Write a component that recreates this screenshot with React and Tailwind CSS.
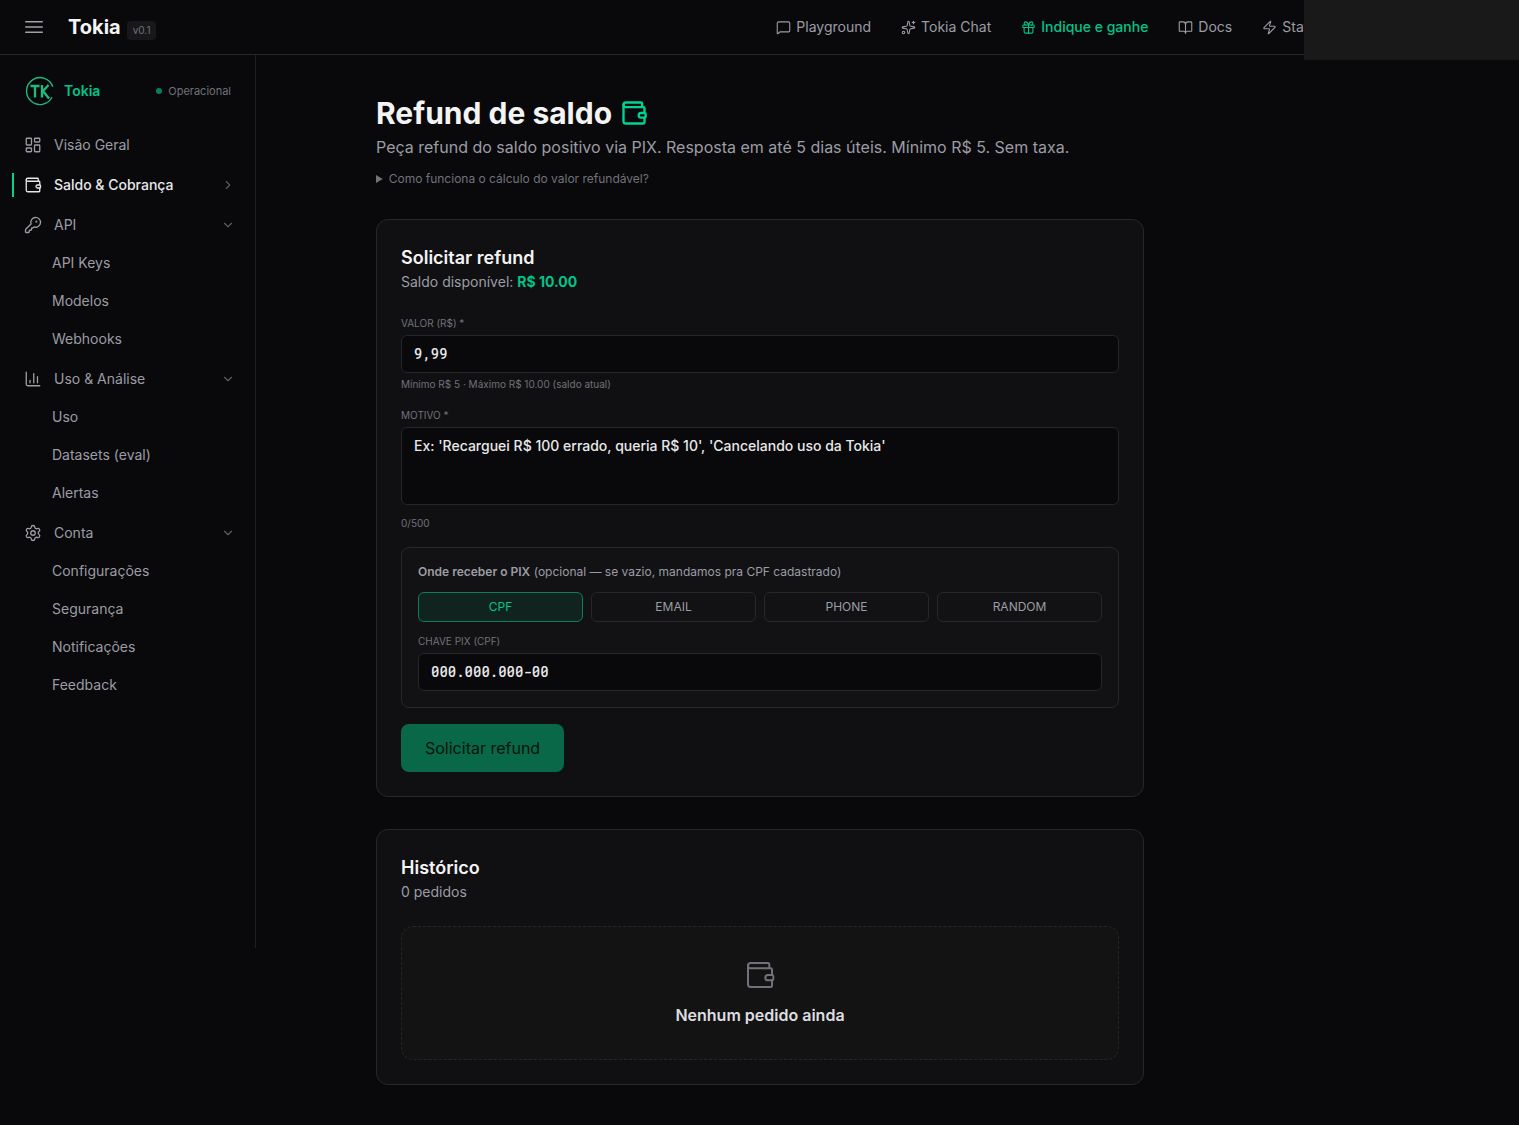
import {
  BookOpen, ChartColumn, ChevronDown, ChevronRight, Gift, KeyRound, LayoutDashboard,
  MessageSquare, Settings, Sparkles, Wallet, Zap,
} from "lucide-react";

const topLinks = [
  { label: "Playground", icon: MessageSquare },
  { label: "Tokia Chat", icon: Sparkles },
  { label: "Indique e ganhe", icon: Gift, accent: true },
  { label: "Docs", icon: BookOpen },
  { label: "Status", icon: Zap },
];

const groups = [
  { label: "Visão Geral", icon: LayoutDashboard },
  { label: "Saldo & Cobrança", icon: Wallet, active: true, chevron: ChevronRight },
  { label: "API", icon: KeyRound, chevron: ChevronDown, items: ["API Keys", "Modelos", "Webhooks"] },
  { label: "Uso & Análise", icon: ChartColumn, chevron: ChevronDown, items: ["Uso", "Datasets (eval)", "Alertas"] },
  { label: "Conta", icon: Settings, chevron: ChevronDown, items: ["Configurações", "Segurança", "Notificações", "Feedback"] },
];

function Logo() {
  return (
    <svg viewBox="-1 -1 32 32" className="size-8" fill="none" stroke="#1dbb7f" aria-hidden="true">
      <path d="M27.800 10.700A13.500 13.500 0 1 0 27 21.300" strokeWidth="1.400" />
      <path d="M5.500 10h9M10 10v11.500M17 9v12.500M23.500 9l-5.500 6 6 7.500" strokeWidth="2.300" />
    </svg>
  );
}

function Header() {
  return (
    <header className="flex h-[55px] items-center border-b border-[#27272a] pl-[22px]">
      <button type="button" aria-label="Menu" className="text-[#a1a1aa]">
        <svg width="24" height="24" viewBox="0 0 24 24" fill="none" stroke="currentColor" strokeWidth="1.5" strokeLinecap="round">
          <path d="M3.750 6.750h16.500M3.750 12h16.500M3.750 17.250h16.500" />
        </svg>
      </button>
      <a href="#" className="ml-[22px] text-xl font-bold text-[#f4f4f5]">Tokia</a>
      <span className="ml-1.5 mt-1.5 rounded bg-[#18181b] px-1.5 py-0.5 text-[10px] leading-[15px] text-[#71717a]">v0.1</span>
      <nav className="ml-auto flex shrink-0 gap-[30px]">
        {topLinks.map(({ label, icon: Icon, accent }) => (
          <a key={label} href="#" className={accent ? "flex items-center gap-[5px] text-sm font-medium text-[#00c489]" : "flex items-center gap-[5px] text-sm text-[#9c9ca5]"}>
            <Icon size={15} strokeWidth={1.75} />
            {label}
          </a>
        ))}
      </nav>
      <div className="w-[195px] shrink-0" />
    </header>
  );
}

function Sidebar() {
  return (
    <aside className="h-[893px] w-64 shrink-0 border-r border-[#1f1f23] px-3 pt-5">
      <div className="mb-5 flex h-8 items-center px-3">
        <Logo />
        <span className="ml-2 text-sm font-semibold text-[#00c489]">Tokia</span>
        <span className="ml-auto flex items-center gap-1.5 text-[11px] text-[#71717a]">
          <span className="size-1.5 rounded-full bg-[#087f5b]" />
          Operacional
        </span>
      </div>
      <nav className="flex flex-col gap-1 text-sm text-[#9c9ca5]">
        {groups.map(({ label, icon: Icon, active, chevron: Chevron, items }) => (
          <div key={label} className="flex flex-col gap-0.5">
            <a href="#" className={active ? "relative flex h-9 items-center pl-3 pr-2 font-medium text-[#e8e8ea]" : "flex h-9 items-center pl-3 pr-2"}>
              {active && <span className="absolute left-0 top-1.5 h-6 w-0.5 bg-[#00d492]" />}
              <Icon size={18} strokeWidth={1.75} />
              <span className="ml-3">{label}</span>
              {Chevron && <Chevron size={14} strokeWidth={2} className="ml-auto text-[#5b5b63]" />}
            </a>
            {items?.map((item) => (
              <a key={item} href="#" className="flex h-9 items-center pl-10">{item}</a>
            ))}
          </div>
        ))}
      </nav>
    </aside>
  );
}

const card = "rounded-xl border border-[#27272a] bg-[#101012] p-6";
const field = "block w-full rounded-md border border-[#27272a] bg-[#09090b] px-3 text-sm font-medium text-[#e8e8ea]";
const mono = "h-[38px] pb-0.5 font-['Roboto_Mono','DejaVu_Sans_Mono',monospace]";
const caption = "block text-[10px] leading-[15px] text-[#71717a]";

function RefundForm() {
  return (
    <form className={card}>
      <h2 className="mt-0.5 text-lg leading-6 font-semibold text-[#f4f4f5]">Solicitar refund</h2>
      <p className="text-sm leading-6 text-[#9c9ca5]">
        Saldo disponível: <strong className="font-bold text-[#00c489]">R$ 10.00</strong>
      </p>
      <label htmlFor="valor" className={`${caption} mt-[22px] mb-1`}>VALOR (R$) *</label>
      <input id="valor" defaultValue="9,99" className={`${field} ${mono}`} />
      <p className={`${caption} mt-1`}>Mínimo R$ 5 · Máximo R$ 10.00 (saldo atual)</p>
      <label htmlFor="motivo" className={`${caption} mt-4 mb-1`}>MOTIVO *</label>
      <textarea id="motivo" placeholder="Ex: 'Recarguei R$ 100 errado, queria R$ 10', 'Cancelando uso da Tokia'" className={`${field} h-[78px] resize-none py-2 placeholder:text-[#e8e8ea]`} />
      <p className={`${caption} mt-[11px]`}>0/500</p>
      <fieldset className="mt-4 rounded-lg border border-[#27272a] bg-[#121214] p-4">
        <p className="text-xs leading-4 text-[#9c9ca5]">
          <strong className="font-semibold">Onde receber o PIX</strong> (opcional — se vazio, mandamos pra CPF cadastrado)
        </p>
        <div className="mt-3 grid grid-cols-4 gap-2 text-xs text-[#9c9ca5]">
          <button type="button" className="h-[30px] rounded-md border border-[#087f5b] bg-[#11231f] text-[#00c489]">CPF</button>
          <button type="button" className="h-[30px] rounded-md border border-[#27272a]">EMAIL</button>
          <button type="button" className="h-[30px] rounded-md border border-[#27272a]">PHONE</button>
          <button type="button" className="h-[30px] rounded-md border border-[#27272a]">RANDOM</button>
        </div>
        <label htmlFor="chave" className={`${caption} mt-3 mb-1`}>CHAVE PIX (CPF)</label>
        <input id="chave" placeholder="000.000.000-00" className={`${field} ${mono} placeholder:text-[#e8e8ea]`} />
      </fieldset>
      <button type="submit" className="mt-4 h-12 rounded-lg bg-[#086848] px-6 text-base text-[#07130f]">Solicitar refund</button>
    </form>
  );
}

export default function App() {
  return (
    <div className="relative min-h-screen bg-[#09090b] font-['Inter','Liberation_Sans',sans-serif] antialiased">
      <Header />
      <div className="absolute right-0 top-0 h-[60px] w-[215px] bg-[#19191a]" />
      <div className="flex">
        <Sidebar />
        <main className="min-w-0 flex-1 px-6 pt-10 pb-10">
          <div className="mr-auto ml-24 max-w-3xl">
            <h1 className="flex items-center gap-2 text-3xl leading-9 font-bold text-[#f4f4f5]">
              Refund de saldo
              <Wallet size={28} strokeWidth={2} className="text-[#00d492]" />
            </h1>
            <p className="mt-1 text-base leading-6 text-[#9c9ca5]">
              Peça refund do saldo positivo via PIX. Resposta em até 5 dias úteis. Mínimo R$ 5. Sem taxa.
            </p>
            <details className="mt-3 mb-8 text-xs leading-4 text-[#71717a]">
              <summary>Como funciona o cálculo do valor refundável?</summary>
            </details>
            <RefundForm />
            <section className={`${card} mt-8`}>
              <h2 className="mt-0.5 text-lg leading-6 font-semibold text-[#f4f4f5]">Histórico</h2>
              <p className="text-sm leading-6 text-[#9c9ca5]">0 pedidos</p>
              <div className="mt-[22px] flex flex-col items-center rounded-xl border border-dashed border-[#27272a] bg-[#131313] py-8">
                <Wallet size={32} strokeWidth={1.5} className="text-[#71717a]" />
                <p className="mt-3 text-base leading-6 font-semibold text-[#dedee0]">Nenhum pedido ainda</p>
              </div>
            </section>
          </div>
        </main>
      </div>
    </div>
  );
}
